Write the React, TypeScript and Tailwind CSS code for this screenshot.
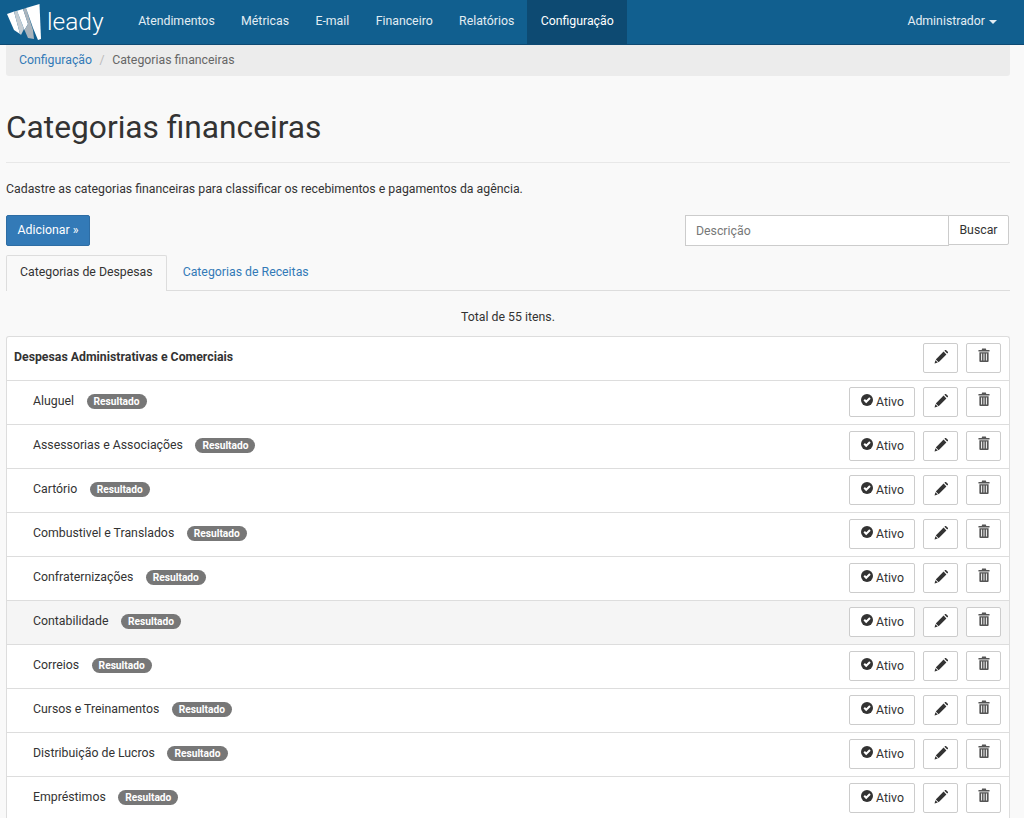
const NAV = ["Atendimentos", "Métricas", "E-mail", "Financeiro", "Relatórios", "Configuração"];

const ROWS = [
  "Aluguel",
  "Assessorias e Associações",
  "Cartório",
  "Combustivel e Translados",
  "Confraternizações",
  "Contabilidade",
  "Correios",
  "Cursos e Treinamentos",
  "Distribuição de Lucros",
  "Empréstimos",
];

function Logo() {
  return (
    <svg width="36" height="38" viewBox="7 3 36 38" className="shrink-0">
      <path d="M7 14 L14 11.5 L20 34 L14 30 Z" fill="#fff" />
      <path d="M14 11.5 L17 10.8 L24 29 L21 35 L20 34 Z" fill="#c4ccd2" />
      <path d="M17 10.8 L23 9 L28 24 L24.5 30 Z" fill="#fff" />
      <path d="M23 9 L26 8 L33 30 L34 39 L28 38 L24.5 30 L28 24 Z" fill="#aab4bc" />
      <path d="M26 8 L39.5 4 L41 39 L38 40 L33 28 Z" fill="#fff" />
    </svg>
  );
}

function Pencil() {
  return (
    <svg width="14" height="14" viewBox="0 0 14 14" fill="#333" className="mt-[2px]">
      <path d="M9.6 1.6 L12.4 4.4 L4.6 12.2 L1.8 9.4 Z" />
      <path d="M1.4 10.2 L3.8 12.6 L0.6 13.4 Z" />
      <path d="M10.4 0.8 L11.2 0 Q11.7 -0.2 12.2 0.2 L13.8 1.8 Q14.2 2.3 14 2.8 L13.2 3.6 Z" />
    </svg>
  );
}

function Trash() {
  return (
    <svg width="12" height="14" viewBox="0 0 13 15" fill="#555" className="mb-[2px]">
      <path d="M4.5 0.5 H8.5 L9 2 H12.5 V3.6 H0.5 V2 H4 Z" />
      <path fillRule="evenodd" d="M1.5 4.4 H11.5 V14 Q11.5 15 10.5 15 H2.5 Q1.5 15 1.5 14 Z M3.4 6 V13.4 H4.4 V6 Z M6 6 V13.4 H7 V6 Z M8.6 6 V13.4 H9.6 V6 Z" />
    </svg>
  );
}

function CheckCircle() {
  return (
    <svg width="12" height="12" viewBox="0 0 12 12">
      <circle cx="6" cy="6" r="6" fill="#333" />
      <path d="M3.2 5.8 L5.2 7.8 L9 4" fill="none" stroke="#fff" strokeWidth="2" />
    </svg>
  );
}

function IconButton({ children }: { children: React.ReactNode }) {
  return (
    <button
      type="button"
      className="flex h-[30px] w-[35px] items-center justify-center rounded-[2px] border border-[#ccc] bg-white pb-1"
    >
      {children}
    </button>
  );
}

function RowActions({ status }: { status: boolean }) {
  return (
    <div className="flex items-center gap-2">
      {status && (
        <button
          type="button"
          className="flex h-[30px] w-[66px] items-center justify-center gap-[3px] rounded-[2px] border border-[#ccc] bg-white pt-px pl-px text-[12.3px] text-[#333]"
        >
          <span className="mb-[5px]">
            <CheckCircle />
          </span>
          Ativo
        </button>
      )}
      <IconButton>
        <Pencil />
      </IconButton>
      <IconButton>
        <Trash />
      </IconButton>
    </div>
  );
}

export default function App() {
  return (
    <div className="h-[818px] overflow-hidden bg-[#f9f9f9] font-['Roboto',sans-serif] text-[12.3px] text-[#333]">
      <nav className="flex h-[45px] items-stretch border-b border-[#0e4a73] bg-[#115f8f] text-[12.3px] text-[#e3edf3]">
        <div className="flex w-[125px] items-center gap-[4px] pl-[7px]">
          <Logo />
          <span className="text-[24.5px] leading-none font-light text-white">leady</span>
        </div>
        {NAV.map((item) => (
          <a
            key={item}
            className={
              item === "Configuração"
                ? "flex items-center bg-[#0d4a72] px-[13.2px] pb-px text-white"
                : "flex items-center px-[13.2px] pb-px"
            }
          >
            {item}
          </a>
        ))}
        <div className="ml-auto flex items-center gap-[4px] pr-[27px] pb-px">
          Administrador
          <span className="h-0 w-0 border-x-4 border-t-4 border-x-transparent border-t-[#e3edf3]" />
        </div>
      </nav>

      <div className="px-[6px] pr-[14px]">
        <div className="flex h-[31px] items-center rounded-b-[3px] bg-[#ececec] px-[13px]">
          <a className="text-[#337ab7]">Configuração</a>
          <span className="px-[7.5px] text-[#bbb]">/</span>
          <span className="text-[#666]">Categorias financeiras</span>
        </div>

        <h1 className="mt-[32px] text-[31.7px] leading-[40px] font-normal">Categorias financeiras</h1>
        <div className="mt-[14px] border-t border-[#e8e8e8]" />
        <p className="mt-[17px] leading-[18px]">
          Cadastre as categorias financeiras para classificar os recebimentos e pagamentos da agência.
        </p>

        <div className="mt-[17px] flex items-center justify-between">
          <button
            type="button"
            className="h-[31px] w-[84px] rounded-[2px] border border-[#2e6da4] bg-[#337ab7] text-white"
          >
            Adicionar »
          </button>
          <div className="mr-px flex">
            <input
              placeholder="Descrição"
              className="h-[31px] w-[264px] border border-[#ccc] bg-white px-[10px] text-[12.3px] placeholder:text-[#777]"
            />
            <button
              type="button"
              className="-ml-px h-[30px] w-[61px] rounded-r-[2px] border border-[#ccc] bg-white"
            >
              Buscar
            </button>
          </div>
        </div>

        <div className="mt-[9px] flex h-[36px] border-b border-[#ddd]">
          <div className="h-[36px] rounded-t-[2px] border border-b-0 border-[#ddd] bg-[#f9f9f9] px-[13px] leading-[33px]">
            Categorias de Despesas
          </div>
          <a className="px-[16px] leading-[34px] text-[#337ab7]">Categorias de Receitas</a>
        </div>

        <p className="mt-[17px] text-center leading-[18px]">Total de 55 itens.</p>

        <div className="mt-[10px] rounded-t-[3px] border border-b-0 border-[#ddd] bg-white">
          <div className="flex h-[43px] items-center justify-between pr-[8px] pb-[2px] pl-[7px]">
            <span className="font-bold">Despesas Administrativas e Comerciais</span>
            <RowActions status={false} />
          </div>
          {ROWS.map((name) => (
            <div
              key={name}
              className={
                name === "Contabilidade"
                  ? "flex h-[44px] items-center justify-between border-t border-[#ddd] bg-[#f5f5f5] pr-[8px] pb-[2px] pl-[26px]"
                  : "flex h-[44px] items-center justify-between border-t border-[#ddd] pr-[8px] pb-[2px] pl-[26px]"
              }
            >
              <div className="flex items-center gap-[12.5px]">
                <span>{name}</span>
                <span className="rounded-full bg-[#777] px-[7px] text-[10.2px] leading-[15px] font-bold text-white">
                  Resultado
                </span>
              </div>
              <RowActions status />
            </div>
          ))}
        </div>
      </div>
    </div>
  );
}
